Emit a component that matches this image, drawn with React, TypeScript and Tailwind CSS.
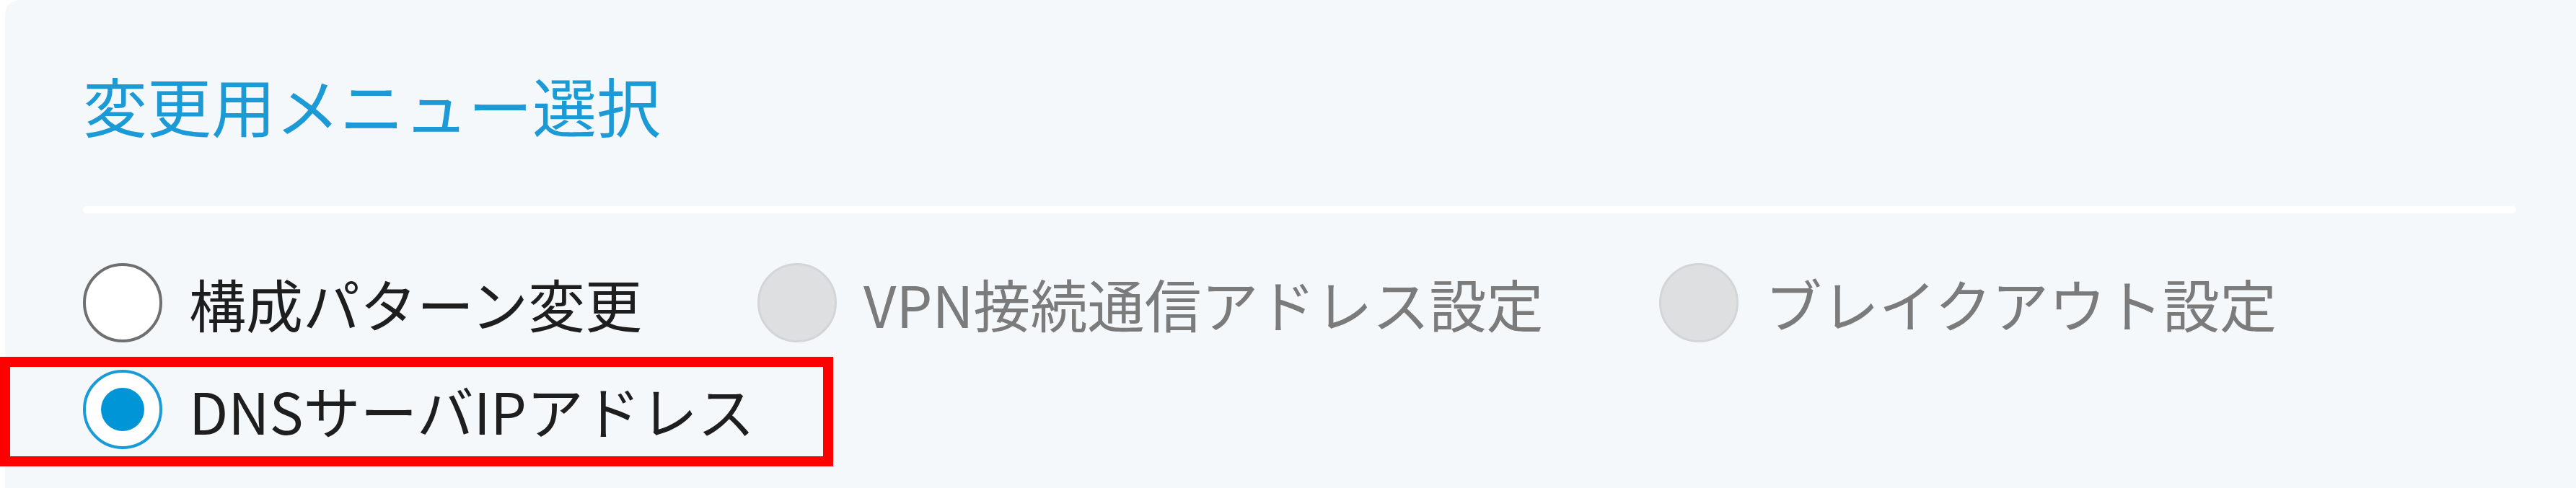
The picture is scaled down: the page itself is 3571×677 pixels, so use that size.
import React from 'react';

type Option = {
  id: string;
  label: string;
  disabled?: boolean;
};

const options: Option[] = [
  { id: 'pattern', label: '構成パターン変更' },
  { id: 'vpn', label: 'VPN接続通信アドレス設定', disabled: true },
  { id: 'breakout', label: 'ブレイクアウト設定', disabled: true },
  { id: 'dns', label: 'DNSサーバIPアドレス' },
];

const RadioItem = ({ option, checked }: { option: Option; checked: boolean }) => {
  let circle = 'border-[4px] border-[#6f6f6f] bg-white';
  if (option.disabled) circle = 'border-[3px] border-[#d4d5d7] bg-[#dedfe1]';
  if (checked) circle = 'border-[4px] border-[#1a9ad6] bg-white';

  return (
    <label className="flex h-[110px] items-center gap-[37px] cursor-pointer">
      <span className={`flex h-[110px] w-[110px] shrink-0 items-center justify-center rounded-full ${circle}`}>
        {checked && <span className="h-[60px] w-[60px] rounded-full bg-[#0095d6]" />}
      </span>
      <span
        className={`text-[79px] leading-none whitespace-nowrap ${
          option.disabled ? 'text-[#7b7b7b]' : 'text-[#1e1e1e]'
        }`}
      >
        {option.label}
      </span>
    </label>
  );
};

export default function App() {
  const selected = 'dns';

  return (
    <div
      className="relative h-[677px] w-full overflow-hidden bg-white"
      style={{ fontFamily: '"Noto Sans CJK JP", "Noto Sans", sans-serif' }}
    >
      <div className="ml-[7px] h-full rounded-tl-[20px] bg-[#f5f8fb] pl-[108px] pr-[83px] pt-[100px]">
        <h2 className="text-[89px] font-normal leading-none text-[#1b9ad6]">変更用メニュー選択</h2>
        <div className="mt-[97px] h-[10px] rounded-full bg-white" />
        <div className="mt-[69px] flex flex-wrap gap-x-[160px] gap-y-[38px]">
          {options.map((o) => (
            <RadioItem key={o.id} option={o} checked={o.id === selected} />
          ))}
        </div>
      </div>

      {/* annotation frame */}
      <div className="pointer-events-none absolute left-0 top-[495px] h-[152px] w-[1155px] border-[14px] border-[#ff0000]" />
    </div>
  );
}
